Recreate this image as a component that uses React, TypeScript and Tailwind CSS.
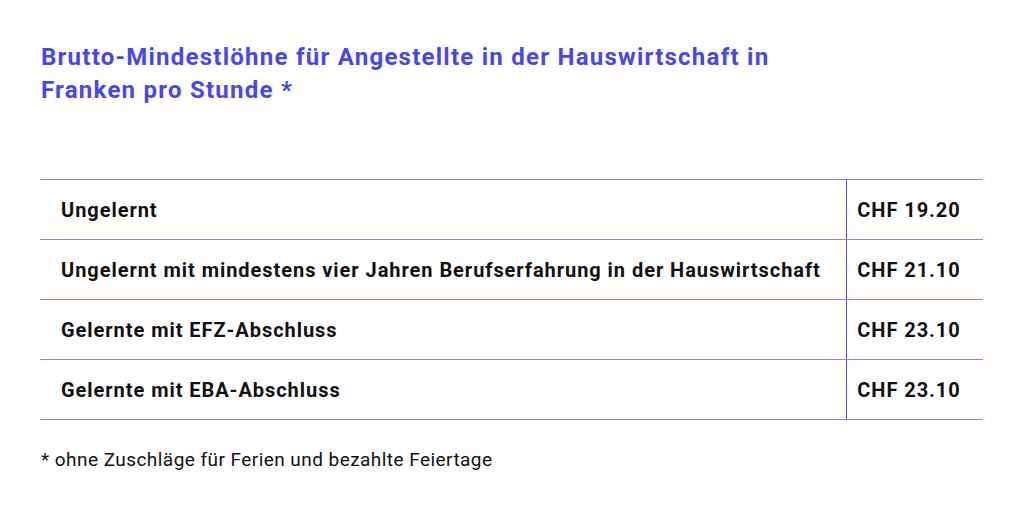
import React from "react";

const rows = [
  ["Ungelernt", "CHF 19.20"],
  ["Ungelernt mit mindestens vier Jahren Berufserfahrung in der Hauswirtschaft", "CHF 21.10"],
  ["Gelernte mit EFZ-Abschluss", "CHF 23.10"],
  ["Gelernte mit EBA-Abschluss", "CHF 23.10"],
];

export default function App() {
  return (
    <div className="w-[1024px] h-[510px] bg-white font-['Roboto',sans-serif] text-[#111] pl-[40px] pt-[41px]">
      <h1 className="text-[24px] leading-[33px] tracking-[1.25px] font-bold text-[#4646f5] pl-[1px] w-[800px]">
        Brutto-Mindestlöhne für Angestellte in der Hauswirtschaft in
        <br />
        Franken pro Stunde *
      </h1>
      <div className="mt-[72px] w-[943px] border-t border-[#8585f7]">
        {rows.map(([label, price], i) => (
          <div key={i} className="flex h-[60px] border-b border-[#8585f7]">
            <div className="w-[806px] flex items-center pl-[21px] text-[20px] tracking-[0.95px] font-bold whitespace-nowrap">{label}</div>
            <div className="flex-1 flex items-center justify-center border-l border-[#4e4ef2] text-[20px] tracking-[0.95px] font-bold pr-[12px] whitespace-nowrap">{price}</div>
          </div>
        ))}
      </div>
      <p className="mt-[26px] text-[19px] leading-[28px] tracking-[0.45px] pl-[1px]">* ohne Zuschläge für Ferien und bezahlte Feiertage</p>
    </div>
  );
}
